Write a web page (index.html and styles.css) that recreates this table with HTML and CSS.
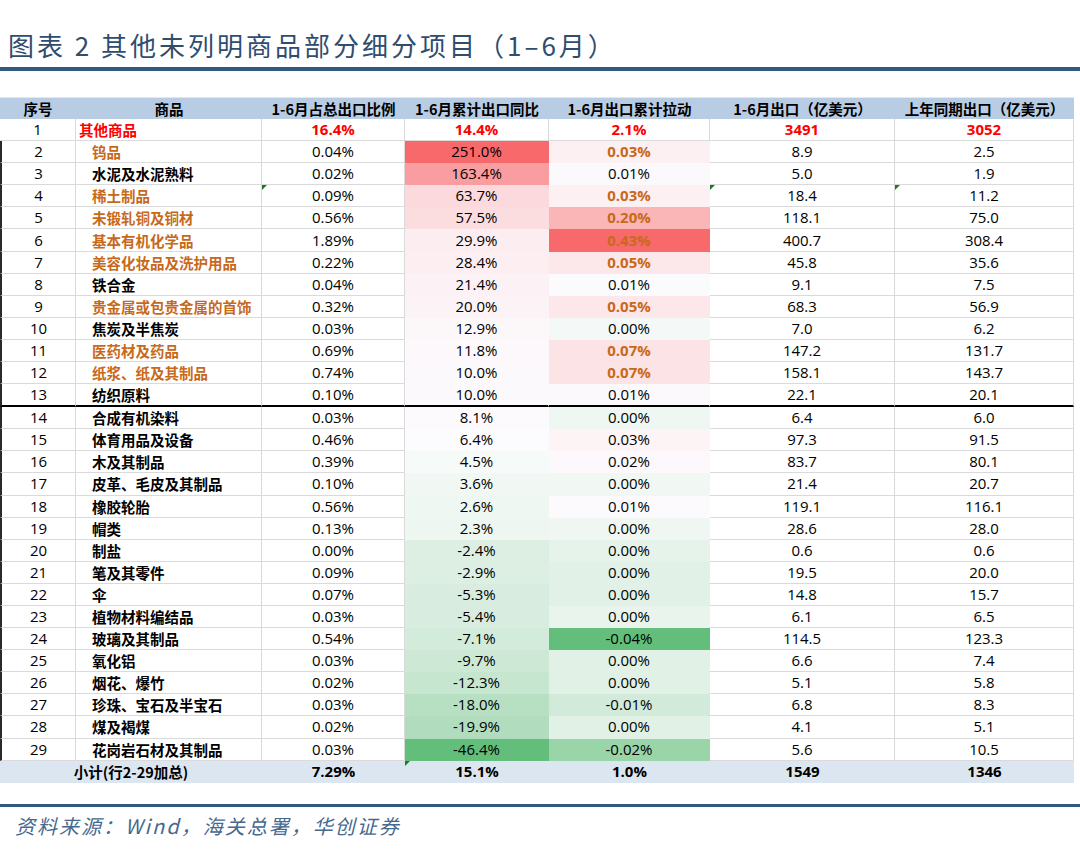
FILE: index.html
```html
<!DOCTYPE html>
<html lang="zh-CN">
<head>
<meta charset="utf-8">
<title>图表 2</title>
<link rel="stylesheet" href="styles.css">
</head>
<body>
<div class="page">
  <h1 class="title">图表 2 其他未列明商品部分细分项目（1–6月）</h1>
  <div class="rule"></div>
  <table class="data">
    <colgroup>
      <col style="width:76px"><col style="width:186px"><col style="width:143px"><col style="width:144px"><col style="width:161px"><col style="width:185px"><col style="width:179px">
    </colgroup>
    <thead>
      <tr><th>序号</th><th>商品</th><th>1-6月占总出口比例</th><th>1-6月累计出口同比</th><th>1-6月出口累计拉动</th><th>1-6月出口（亿美元）</th><th>上年同期出口（亿美元）</th></tr>
    </thead>
    <tbody>
      <tr class="red"><td class="plain">1</td><td class="name first">其他商品</td><td>16.4%</td><td>14.4%</td><td>2.1%</td><td>3491</td><td>3052</td></tr>
      <tr><td class="edge">2</td><td class="name o">钨品</td><td>0.04%</td><td class="f" style="background:#f8696b">251.0%</td><td class="f o" style="background:#fdf0f2">0.03%</td><td>8.9</td><td>2.5</td></tr>
      <tr><td class="edge">3</td><td class="name">水泥及水泥熟料</td><td>0.02%</td><td class="f" style="background:#f99da0">163.4%</td><td class="f" style="background:#fbf9fc">0.01%</td><td>5.0</td><td>1.9</td></tr>
      <tr><td class="edge">4</td><td class="name o">稀土制品</td><td><i class="tri"></i>0.09%</td><td class="f" style="background:#fbd9dc">63.7%</td><td class="f o" style="background:#fdf0f2">0.03%</td><td><i class="tri"></i>18.4</td><td><i class="tri"></i>11.2</td></tr>
      <tr><td class="edge">5</td><td class="name o">未锻轧铜及铜材</td><td>0.56%</td><td class="f" style="background:#fbdde0">57.5%</td><td class="f o" style="background:#fab5b7">0.20%</td><td>118.1</td><td>75.0</td></tr>
      <tr><td class="edge">6</td><td class="name o">基本有机化学品</td><td>1.89%</td><td class="f" style="background:#fcedf0">29.9%</td><td class="f o" style="background:#f8696b">0.43%</td><td>400.7</td><td>308.4</td></tr>
      <tr><td class="edge">7</td><td class="name o">美容化妆品及洗护用品</td><td>0.22%</td><td class="f" style="background:#fceef1">28.4%</td><td class="f o" style="background:#fce8ea">0.05%</td><td>45.8</td><td>35.6</td></tr>
      <tr><td class="edge">8</td><td class="name">铁合金</td><td>0.04%</td><td class="f" style="background:#fcf2f5">21.4%</td><td class="f" style="background:#fbfafd">0.01%</td><td>9.1</td><td>7.5</td></tr>
      <tr><td class="edge">9</td><td class="name o">贵金属或包贵金属的首饰</td><td>0.32%</td><td class="f" style="background:#fcf3f6">20.0%</td><td class="f o" style="background:#fce8ea">0.05%</td><td>68.3</td><td>56.9</td></tr>
      <tr><td class="edge">10</td><td class="name">焦炭及半焦炭</td><td>0.03%</td><td class="f" style="background:#fcf8fa">12.9%</td><td class="f" style="background:#f4f9f7">0.00%</td><td>7.0</td><td>6.2</td></tr>
      <tr><td class="edge">11</td><td class="name o">医药材及药品</td><td>0.69%</td><td class="f" style="background:#fcf8fb">11.8%</td><td class="f o" style="background:#fce3e5">0.07%</td><td>147.2</td><td>131.7</td></tr>
      <tr><td class="edge">12</td><td class="name o">纸浆、纸及其制品</td><td>0.74%</td><td class="f" style="background:#fcf9fc">10.0%</td><td class="f o" style="background:#fce3e5">0.07%</td><td>158.1</td><td>143.7</td></tr>
      <tr class="sep"><td class="edge">13</td><td class="name">纺织原料</td><td>0.10%</td><td class="f" style="background:#fcf9fc">10.0%</td><td class="f" style="background:#fbf9fc">0.01%</td><td>22.1</td><td>20.1</td></tr>
      <tr><td class="edge">14</td><td class="name">合成有机染料</td><td>0.03%</td><td class="f" style="background:#fcfafd">8.1%</td><td class="f" style="background:#eff7f2">0.00%</td><td>6.4</td><td>6.0</td></tr>
      <tr><td class="edge">15</td><td class="name">体育用品及设备</td><td>0.46%</td><td class="f" style="background:#fcfbfe">6.4%</td><td class="f" style="background:#fdf4f6">0.03%</td><td>97.3</td><td>91.5</td></tr>
      <tr><td class="edge">16</td><td class="name">木及其制品</td><td>0.39%</td><td class="f" style="background:#f6faf8">4.5%</td><td class="f" style="background:#fcf8fb">0.02%</td><td>83.7</td><td>80.1</td></tr>
      <tr><td class="edge">17</td><td class="name">皮革、毛皮及其制品</td><td>0.10%</td><td class="f" style="background:#f1f8f4">3.6%</td><td class="f" style="background:#f1f8f4">0.00%</td><td>21.4</td><td>20.7</td></tr>
      <tr><td class="edge">18</td><td class="name">橡胶轮胎</td><td>0.56%</td><td class="f" style="background:#eef7f1">2.6%</td><td class="f" style="background:#fcfafd">0.01%</td><td>119.1</td><td>116.1</td></tr>
      <tr><td class="edge">19</td><td class="name">帽类</td><td>0.13%</td><td class="f" style="background:#edf6f0">2.3%</td><td class="f" style="background:#f0f7f3">0.00%</td><td>28.6</td><td>28.0</td></tr>
      <tr><td class="edge">20</td><td class="name">制盐</td><td>0.00%</td><td class="f" style="background:#ddefe3">-2.4%</td><td class="f" style="background:#e5f3ea">0.00%</td><td>0.6</td><td>0.6</td></tr>
      <tr><td class="edge">21</td><td class="name">笔及其零件</td><td>0.09%</td><td class="f" style="background:#dcefe2">-2.9%</td><td class="f" style="background:#e2f1e7">0.00%</td><td>19.5</td><td>20.0</td></tr>
      <tr><td class="edge">22</td><td class="name">伞</td><td>0.07%</td><td class="f" style="background:#d8ede0">-5.3%</td><td class="f" style="background:#e2f1e7">0.00%</td><td>14.8</td><td>15.7</td></tr>
      <tr><td class="edge">23</td><td class="name">植物材料编结品</td><td>0.03%</td><td class="f" style="background:#d8ede0">-5.4%</td><td class="f" style="background:#e8f4ec">0.00%</td><td>6.1</td><td>6.5</td></tr>
      <tr><td class="edge">24</td><td class="name">玻璃及其制品</td><td>0.54%</td><td class="f" style="background:#d3ebdb">-7.1%</td><td class="f" style="background:#63be7b">-0.04%</td><td>114.5</td><td>123.3</td></tr>
      <tr><td class="edge">25</td><td class="name">氧化铝</td><td>0.03%</td><td class="f" style="background:#cde8d5">-9.7%</td><td class="f" style="background:#e1f1e6">0.00%</td><td>6.6</td><td>7.4</td></tr>
      <tr><td class="edge">26</td><td class="name">烟花、爆竹</td><td>0.02%</td><td class="f" style="background:#c7e6d0">-12.3%</td><td class="f" style="background:#e1f1e6">0.00%</td><td>5.1</td><td>5.8</td></tr>
      <tr><td class="edge">27</td><td class="name">珍珠、宝石及半宝石</td><td>0.03%</td><td class="f" style="background:#b7e0c3">-18.0%</td><td class="f" style="background:#d2eada">-0.01%</td><td>6.8</td><td>8.3</td></tr>
      <tr><td class="edge">28</td><td class="name">煤及褐煤</td><td>0.02%</td><td class="f" style="background:#b1ddbe">-19.9%</td><td class="f" style="background:#e1f1e6">0.00%</td><td>4.1</td><td>5.1</td></tr>
      <tr><td class="edge">29</td><td class="name">花岗岩石材及其制品</td><td>0.03%</td><td class="f" style="background:#63be7b">-46.4%</td><td class="f" style="background:#9ad4a9">-0.02%</td><td>5.6</td><td>10.5</td></tr>
      <tr class="total"><td colspan="2" class="cjk">小计(行2-29加总)</td><td>7.29%</td><td><i class="tri"></i>15.1%</td><td>1.0%</td><td>1549</td><td>1346</td></tr>
    </tbody>
  </table>
  <div class="rule bottom"></div>
  <p class="source">资料来源：Wind，海关总署，华创证券</p>
</div>
</body>
</html>
```
FILE: styles.css
```css
* { box-sizing: border-box; }

body {
  margin: 0;
  background: #ffffff;
  color: #000000;
  font-family: "Open Sans", "Noto Sans CJK SC", sans-serif;
}

.page {
  width: 1080px;
}

.title {
  margin: 0;
  padding: 30px 0 0 8px;
  font-family: "Noto Sans CJK SC", sans-serif;
  font-weight: 400;
  font-size: 26px;
  line-height: 30px;
  letter-spacing: 3px;
  color: #2f4d6e;
}

.rule {
  height: 4px;
  margin-top: 7px;
  background: #325a80;
}

.rule.bottom {
  height: 3px;
  margin-top: 21px;
}

.data {
  margin-top: 26px;
  width: 1074px;
  table-layout: fixed;
  border-collapse: separate;
  border-spacing: 0;
  font-size: 15px;
}

.data th {
  height: 21px;
  padding: 0;
  background: #b8cce4;
  font-family: "Noto Sans CJK SC", sans-serif;
  font-weight: 700;
  font-size: 14.5px;
  line-height: 21px;
  text-align: center;
  white-space: nowrap;
  border-top: 1px solid #e4e8ee;
}

.data td {
  height: 22.1px;
  padding: 0;
  line-height: 21px;
  text-align: center;
  white-space: nowrap;
  border-right: 1px solid #dadada;
  border-bottom: 1px solid #dadada;
  position: relative;
}

.data td.f {
  border-right-color: transparent;
  border-bottom-color: transparent;
}

.data td.edge {
  border-left: 2px solid #2a2a2a;
}

.data td.name {
  text-align: left;
  padding-left: 16px;
  font-family: "Noto Sans CJK SC", sans-serif;
  font-weight: 700;
  font-size: 14.5px;
}

.data td.name.first {
  padding-left: 3px;
}

.red td {
  color: #ff0000;
  font-weight: 700;
}

.red td.plain {
  color: #000000;
  font-weight: 400;
}

.o {
  color: #c8691a;
  font-weight: 700;
}

.data tr.sep td {
  border-bottom: 2px solid #000000;
}

.data tr.total td {
  height: 22px;
  background: #dce6f1;
  border: none;
  font-weight: 700;
}

.data td.cjk {
  font-family: "Noto Sans CJK SC", sans-serif;
  font-size: 14.5px;
}

.tri {
  position: absolute;
  left: 0;
  top: 0;
  width: 0;
  height: 0;
  border-top: 5px solid #1d7a1d;
  border-right: 5px solid transparent;
}

.source {
  margin: 4px 0 0 15px;
  font-family: "Noto Sans CJK SC", sans-serif;
  font-style: italic;
  font-weight: 400;
  font-size: 20px;
  line-height: 30px;
  letter-spacing: 2px;
  color: #46698f;
}
```
